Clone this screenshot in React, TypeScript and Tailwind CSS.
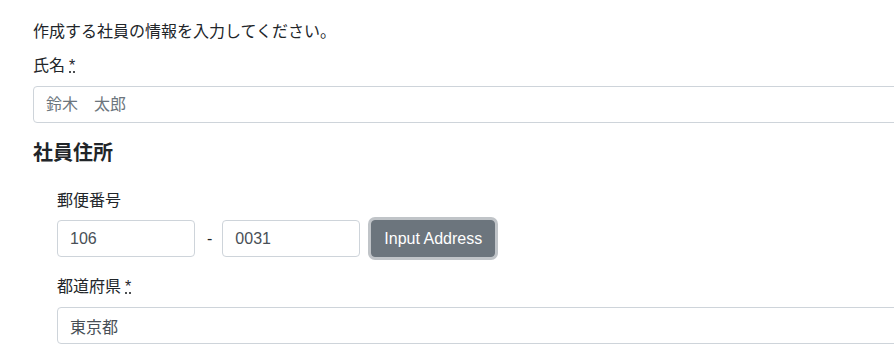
const inputCls =
  'block h-[37px] rounded-[4px] border border-[#ced4da] bg-white px-3 text-[#495057] placeholder:text-[#6c757d] outline-none';

const RequiredMark = () => (
  <abbr title="required" className="ml-1 underline decoration-dotted">
    *
  </abbr>
);

export default function App() {
  return (
    <div
      className="w-[894px] h-[354px] overflow-hidden bg-white text-[#212529]"
      style={{ fontFamily: '"Liberation Sans", "Noto Sans CJK JP", sans-serif' }}
    >
      <div className="w-[900px] pl-[33px] pt-[20px]">
        <p className="text-[16px] leading-6 mb-[10px]">作成する社員の情報を入力してください。</p>

        {/* 氏名 */}
        <div className="mb-[18px]">
          <label className="block text-[16px] leading-6 mb-2">
            氏名
            <RequiredMark />
          </label>
          <input className={`${inputCls} w-full text-[16px]`} placeholder="鈴木　太郎" />
        </div>

        {/* 社員住所 */}
        <h5 className="text-[20px] font-bold leading-6 mb-6">社員住所</h5>

        <div className="pl-6">
          <div className="mb-[18px]">
            <label className="block text-[16px] leading-6 mb-[7px]">郵便番号</label>
            <div className="flex items-center">
              <input className={`${inputCls} w-[138px] text-base`} defaultValue="106" />
              <span className="ml-3 mr-[10px] text-base">-</span>
              <input className={`${inputCls} w-[138px] text-base`} defaultValue="0031" />
              <button className="ml-[11px] h-[37px] rounded-[4px] border border-[#6c757d] bg-[#6c757d] px-3 text-base text-white shadow-[0_0_0_3px_rgba(130,138,145,0.5)]">
                Input Address
              </button>
            </div>
          </div>

          <div>
            <label className="block text-[16px] leading-6 mb-2">
              都道府県
              <RequiredMark />
            </label>
            <input className={`${inputCls} w-full text-[16px]`} defaultValue="東京都" />
          </div>
        </div>
      </div>
    </div>
  );
}
